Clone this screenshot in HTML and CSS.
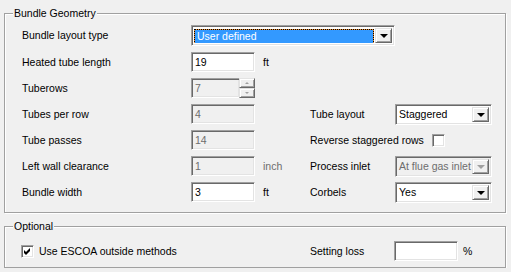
FILE: index.html
```html
<!DOCTYPE html>
<html>
<head>
<meta charset="utf-8">
<link rel="stylesheet" href="styles.css">
</head>
<body>
<div class="dialog">
  <fieldset class="group group-geometry">
    <legend>Bundle Geometry</legend>
    <div class="form-grid geometry-grid">
      <span class="label main-label">Bundle layout type</span>
      <div class="combo combo-wide">
        <div class="combo-text"><span class="selected">User defined</span></div>
        <div class="drop-btn"><span class="arrow"></span></div>
      </div>

      <span class="label main-label">Heated tube length</span>
      <div class="textbox">19</div>
      <span class="unit">ft</span>

      <span class="label main-label">Tuberows</span>
      <div class="spinner">
        <div class="textbox disabled spin-text">7</div>
        <div class="spin-buttons">
          <div class="spin-btn"><span class="mini-arrow up"></span></div>
          <div class="spin-btn"><span class="mini-arrow down"></span></div>
        </div>
      </div>

      <span class="label main-label">Tubes per row</span>
      <div class="textbox disabled">4</div>
      <span class="label right-label">Tube layout</span>
      <div class="combo combo-small">
        <div class="combo-text">Staggered</div>
        <div class="drop-btn"><span class="arrow"></span></div>
      </div>

      <span class="label main-label">Tube passes</span>
      <div class="textbox disabled">14</div>
      <div class="check-row reverse-row">
        <span class="label">Reverse staggered rows</span>
        <span class="checkbox"></span>
      </div>

      <span class="label main-label">Left wall clearance</span>
      <div class="textbox disabled">1</div>
      <span class="unit disabled-text">inch</span>
      <span class="label right-label">Process inlet</span>
      <div class="combo combo-small combo-disabled">
        <div class="combo-text">At flue gas inlet</div>
        <div class="drop-btn"><span class="arrow"></span></div>
      </div>

      <span class="label main-label">Bundle width</span>
      <div class="textbox">3</div>
      <span class="unit">ft</span>
      <span class="label right-label">Corbels</span>
      <div class="combo combo-small">
        <div class="combo-text">Yes</div>
        <div class="drop-btn"><span class="arrow"></span></div>
      </div>
    </div>
  </fieldset>

  <fieldset class="group group-optional">
    <legend>Optional</legend>
    <div class="form-grid optional-grid">
      <div class="check-row escoa">
        <span class="checkbox checked">
          <svg width="7" height="7" viewBox="0 0 7 7"><path d="M0 2 L2 4 L6 0 L6 3 L2 7 L0 5 Z" fill="#000"/></svg>
        </span>
        <span class="label">Use ESCOA outside methods</span>
      </div>
      <span class="label right-label">Setting loss</span>
      <div class="loss-cell">
        <div class="textbox"></div>
        <span class="unit">%</span>
      </div>
    </div>
  </fieldset>
</div>
</body>
</html>
```

FILE: styles.css
```css
html, body {
  margin: 0;
  padding: 0;
  background: #f0f0f0;
}

body {
  font-family: "Liberation Sans", Arial, sans-serif;
  font-size: 10.5px;
  color: #000;
}

.dialog {
  padding: 7px 0 0 4px;
  width: 502px;
}

.group {
  margin: 0;
  min-inline-size: 0;
  width: 502px;
  box-sizing: border-box;
  border: 1px solid #a0a0a0;
  box-shadow: inset 1px 1px 0 #fff, 1px 1px 0 #fff;
}

.group legend {
  margin-left: 8px;
  padding: 0 1px;
  line-height: 13px;
  height: 13px;
  background: #f0f0f0;
}

.group-geometry {
  padding: 5px 0 10px 0;
}

.group-optional {
  margin-top: 7px;
  padding: 8px 0 6px 0;
}

.form-grid {
  display: grid;
  grid-template-columns: 169px 72px 47px 85px 1fr;
  align-items: center;
  padding-left: 17px;
}

.geometry-grid {
  grid-template-rows: 21px repeat(6, 20px);
  row-gap: 6px;
}

.optional-grid {
  grid-template-rows: 20px;
}

.label {
  white-space: nowrap;
  line-height: 13px;
}

.main-label {
  grid-column: 1;
}

.right-label {
  grid-column: 4;
}

.unit {
  grid-column: 3;
  white-space: nowrap;
  line-height: 13px;
}

.disabled-text {
  color: #6d6d6d;
}

/* Sunken text box */
.textbox {
  box-sizing: border-box;
  width: 64px;
  height: 20px;
  background: #fff;
  border-top: 1px solid #a0a0a0;
  border-left: 1px solid #a0a0a0;
  border-right: 1px solid #fff;
  border-bottom: 1px solid #fff;
  box-shadow: inset 1px 1px 0 #696969, inset -1px -1px 0 #e3e3e3;
  padding: 0 3px;
  line-height: 18px;
  white-space: nowrap;
  grid-column: 2;
}

.textbox.disabled {
  background: #f0f0f0;
  color: #6d6d6d;
}

/* Spinner */
.spinner {
  grid-column: 2;
  display: flex;
  width: 64px;
  height: 20px;
}

.spin-text {
  width: 48px;
  border-right: none;
}

.spin-buttons {
  display: flex;
  flex-direction: column;
  width: 16px;
  height: 20px;
}

.spin-btn {
  box-sizing: border-box;
  height: 10px;
  background: #f0f0f0;
  border-top: 1px solid #e3e3e3;
  border-left: 1px solid #e3e3e3;
  border-right: 1px solid #696969;
  border-bottom: 1px solid #696969;
  box-shadow: inset 1px 1px 0 #fff, inset -1px -1px 0 #a0a0a0;
  display: flex;
  align-items: center;
  justify-content: center;
}

.mini-arrow {
  width: 0;
  height: 0;
  border-left: 2px solid transparent;
  border-right: 2px solid transparent;
}

.mini-arrow.up {
  border-bottom: 2px solid #a0a0a0;
}

.mini-arrow.down {
  border-top: 2px solid #a0a0a0;
}

/* Combo boxes */
.combo {
  box-sizing: border-box;
  height: 21px;
  background: #fff;
  border-top: 1px solid #a0a0a0;
  border-left: 1px solid #a0a0a0;
  border-right: 1px solid #fff;
  border-bottom: 1px solid #fff;
  box-shadow: inset 1px 1px 0 #696969, inset -1px -1px 0 #e3e3e3;
  padding: 2px;
  display: flex;
  align-items: stretch;
}

.combo-wide {
  grid-column: 2 / 5;
  width: 204px;
}

.combo-small {
  grid-column: 5;
  width: 97px;
}

.combo-text {
  flex: 1;
  min-width: 0;
  padding-left: 1px;
  line-height: 15px;
  white-space: nowrap;
  overflow: hidden;
}

.combo-wide .combo-text {
  padding: 0 1px 0 0;
}

.selected {
  display: block;
  box-sizing: border-box;
  height: 15px;
  margin-top: 1px;
  border: 1px dotted #000;
  background: linear-gradient(#3399ff, #3399ff) padding-box, #e68a2e border-box;
  color: #fff;
  padding-left: 2px;
  line-height: 13px;
}

.combo-disabled {
  background: #f0f0f0;
  color: #6d6d6d;
}

.drop-btn {
  box-sizing: border-box;
  width: 17px;
  flex: none;
  background: #f0f0f0;
  border-top: 1px solid #e3e3e3;
  border-left: 1px solid #e3e3e3;
  border-right: 1px solid #696969;
  border-bottom: 1px solid #696969;
  box-shadow: inset 1px 1px 0 #fff, inset -1px -1px 0 #a0a0a0;
  display: flex;
  align-items: center;
  justify-content: center;
}

.arrow {
  width: 0;
  height: 0;
  border-left: 4px solid transparent;
  border-right: 4px solid transparent;
  border-top: 4px solid #000;
  margin-top: 1px;
}

.combo-disabled .arrow {
  border-top-color: #a0a0a0;
}

/* Checkboxes */
.check-row {
  display: flex;
  align-items: center;
  gap: 8px;
}

.reverse-row {
  grid-column: 4 / 6;
}

.checkbox {
  box-sizing: border-box;
  width: 13px;
  height: 13px;
  background: #fff;
  border-top: 1px solid #a0a0a0;
  border-left: 1px solid #a0a0a0;
  border-right: 1px solid #fff;
  border-bottom: 1px solid #fff;
  box-shadow: inset 1px 1px 0 #696969, inset -1px -1px 0 #e3e3e3;
  display: flex;
  align-items: center;
  justify-content: center;
  flex: none;
}

.checkbox svg {
  display: block;
}

.escoa {
  grid-column: 1 / 4;
  gap: 5px;
  margin-left: -1px;
}

.loss-cell {
  grid-column: 5;
  display: flex;
  align-items: center;
  gap: 5px;
  margin-left: -1px;
}

.loss-cell .unit {
  grid-column: auto;
}
```
